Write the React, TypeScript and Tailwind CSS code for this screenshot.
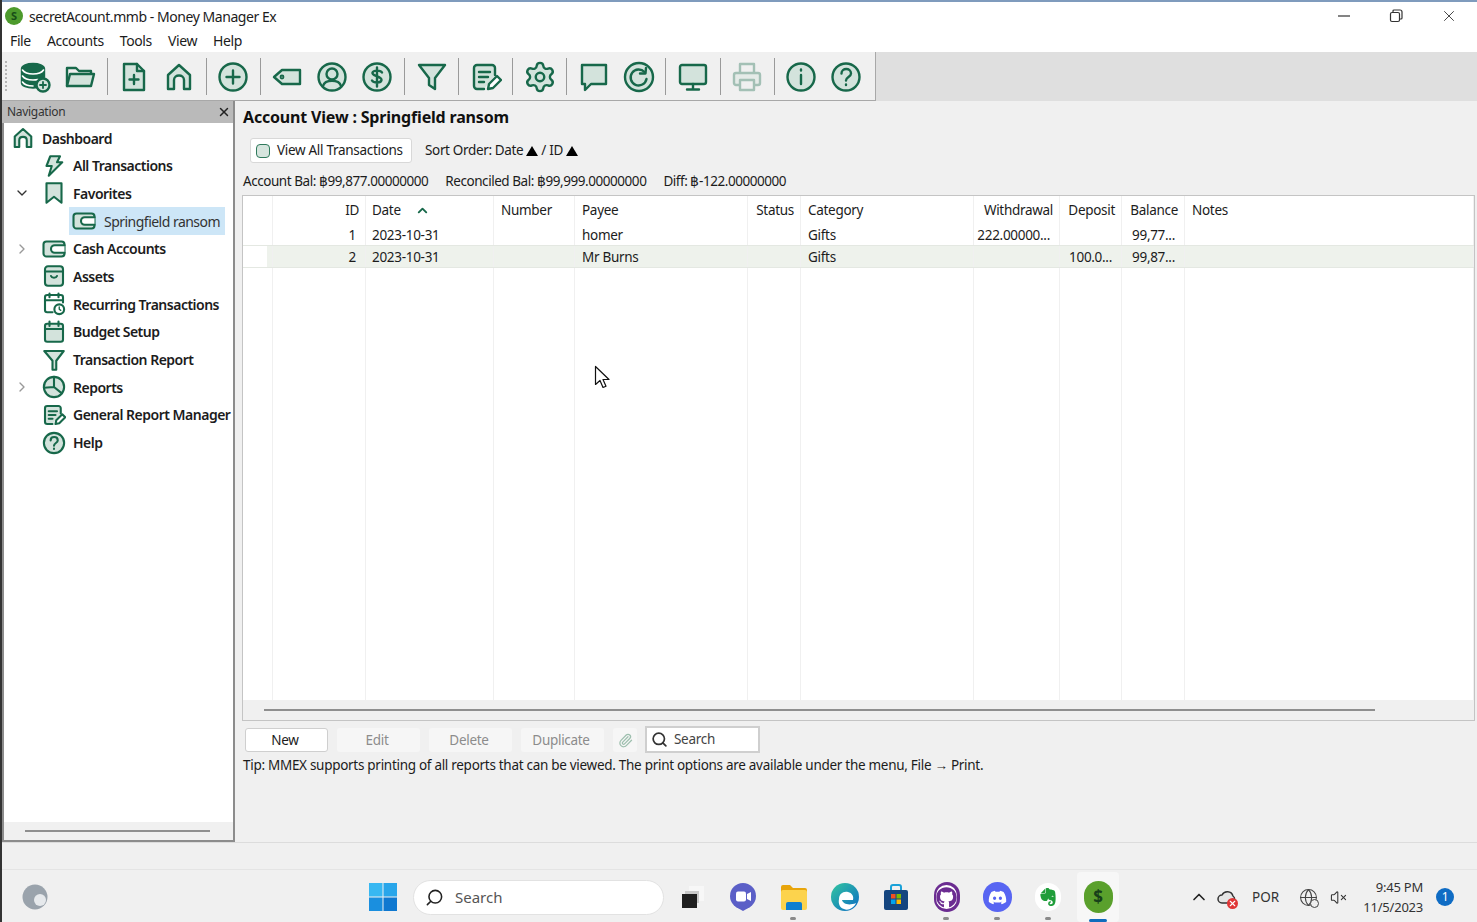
import React from "react";
import { Settings, Search, Globe, VolumeX, ChevronUp, ChevronDown, ChevronRight, Paperclip, X } from "lucide-react";
import { FaGithub, FaDiscord } from "react-icons/fa";
import { SiEvernote } from "react-icons/si";

const G = "#17684a";
const L = "#d3e3dc";

type IP = { size?: number; sw?: number; dim?: boolean };
const Ico = ({ size = 32, sw = 2.4, dim, children }: IP & { children: React.ReactNode }) => (
  <svg width={size} height={size} viewBox="0 0 32 32" fill={L} stroke={G} strokeWidth={sw} strokeLinecap="round" strokeLinejoin="round" opacity={dim ? 0.35 : 1} className="shrink-0">
    {children}
  </svg>
);

const paths: Record<string, React.ReactNode> = {
  db: (<>
    <path d="M3 8c0-3 5-5 11-5s11 2 11 5v8c-3 1-6 4-6 10l-5 .5C8 26.500 3 24.500 3 22z" fill={G} stroke={G} />
    <path d="M3.500 9c2 3 6 4 10.500 4s8.500-1 10.500-4M3.500 15c2 3 6 4 10.500 4 2 0 3 0 5-.5M3.500 21c2 3 6 4 10.500 4" stroke="#fff" strokeWidth="1.6" fill="none" />
    <circle cx="24" cy="24" r="6.500" fill={L} />
    <path d="M24 21v6M21 24h6" strokeWidth="1.800" />
  </>),
  folder: (<>
    <path d="M3 25V7h9l3 3h12v3" fill="none" />
    <path d="M3 25l3-12h24l-3 12z" />
  </>),
  filePlus: (<>
    <path d="M6 3h13l7 7v19H6z" />
    <path d="M19 3v7h7" fill="none" />
    <path d="M16 14v9M11.500 18.500h9" />
  </>),
  home: <path d="M5 28V14L16 4l11 10v14h-6V19c0-6-10-6-10 0v9z" />,
  plus: (<><circle cx="16" cy="16" r="13.500" /><path d="M16 9.500v13M9.500 16h13" /></>),
  tag: (<><path d="M29 9v14H11L3 16l8-7z" /><circle cx="11" cy="16" r="1.500" fill="none" strokeWidth="1.800" /></>),
  user: (<><circle cx="16" cy="16" r="13.500" /><circle cx="16" cy="13" r="5.500" fill="none" /><path d="M7 25c2-7 16-7 18 0" fill="none" /></>),
  dollar: (<><circle cx="16" cy="16" r="13.500" /><path d="M21 11.500c-1-2-8-3-9.500 0-1 4 9 3 9 7.500-.5 3.500-8 3-9.500 .5M16 6.500v19" fill="none" /></>),
  filter: <path d="M3 4h26l-10 13v11l-6-4v-7z" />,
  report: (<>
    <path d="M25 14V7a3 3 0 0 0-3-3H7a3 3 0 0 0-3 3v18a3 3 0 0 0 3 3h7" />
    <path d="M9 11h11M9 16h9M9 21h5" fill="none" />
    <path d="M18 28l1-5 8-8 4 4-8 8z" fill="#fff" />
  </>),
  chat: <path d="M4 4h24v19H13l-6 6v-6H4z" />,
  refresh: (<><circle cx="16" cy="16" r="14" /><path d="M21.500 11a8 8 0 1 0 2 7" fill="none" /><path d="M23 7l-.5 5.500H17" fill="none" /></>),
  monitor: (<><rect x="3" y="4" width="26" height="19" rx="2" /><path d="M16 23v5M10 28.500h12" fill="none" /></>),
  printer: (<><path d="M9 12V3h14v9" fill="none" /><rect x="3" y="12" width="26" height="12" rx="2" /><rect x="9" y="19" width="14" height="10" fill="#f0f0f0" /></>),
  info: (<><circle cx="16" cy="16" r="13.500" /><path d="M16 14v9M16 8.500v1" fill="none" /></>),
  help: (<><circle cx="16" cy="16" r="13.500" /><path d="M11.500 12.500c0-6 9.500-6 9.500 0 0 3.500-5 3.500-5 7M16 23.500v.5" fill="none" /></>),
  bolt: <path d="M11 3h13l-4 8h7L9 29l4-13H6z" />,
  bookmark: <path d="M6 3h20v26l-10-8-10 8z" />,
  wallet: (<><rect x="2" y="6" width="28" height="20" rx="4" /><path d="M30 11H17a5 5 0 0 0 0 10h13" fill="#fff" /></>),
  box: (<><rect x="4" y="3" width="24" height="26" rx="4" /><path d="M4 10h24" fill="none" /><path d="M12 16c1 3 7 3 8 0" fill="none" /></>),
  calClock: (<>
    <path d="M14 27H7a3 3 0 0 1-3-3V7a3 3 0 0 1 3-3h18a3 3 0 0 1 3 3v7" fill="none" />
    <path d="M4 11h24M10 2v5M22 2v5" fill="none" />
    <circle cx="23" cy="23" r="6.500" fill="#fff" /><path d="M23 20v3l2 1.500" fill="none" strokeWidth="1.800" />
  </>),
  calendar: (<><rect x="4" y="5" width="24" height="24" rx="3" /><path d="M4 12h24M10 2v6M22 2v6" fill="none" /></>),
  funnel: <path d="M3 4h26L19 17v12h-5V17z" />,
  pie: (<><circle cx="16" cy="16" r="13.500" /><path d="M16 2.500V16l10.500 8.500M16 16L2.500 17" fill="none" /></>),
};

const Icon = ({ n, ...p }: IP & { n: string }) => <Ico {...p}>{paths[n]}</Ico>;

const toolbar: (string | null)[] = ["db", "folder", null, "filePlus", "home", null, "plus", null, "tag", "user", "dollar", null, "filter", null, "report", null, "gear", null, "chat", "refresh", null, "monitor", null, "printer", null, "info", "help"];

const nav = [
  { t: "Dashboard", i: "home", x: 11, tx: 40 },
  { t: "All Transactions", i: "bolt", x: 42, tx: 71 },
  { t: "Favorites", i: "bookmark", x: 42, tx: 71, c: "d" },
  { t: "Springfield ransom", i: "wallet", x: 72, tx: 102, sel: true },
  { t: "Cash Accounts", i: "wallet", x: 42, tx: 71, c: "r" },
  { t: "Assets", i: "box", x: 42, tx: 71 },
  { t: "Recurring Transactions", i: "calClock", x: 42, tx: 71 },
  { t: "Budget Setup", i: "calendar", x: 42, tx: 71 },
  { t: "Transaction Report", i: "funnel", x: 42, tx: 71 },
  { t: "Reports", i: "pie", x: 42, tx: 71, c: "r" },
  { t: "General Report Manager", i: "report", x: 42, tx: 71 },
  { t: "Help", i: "help", x: 42, tx: 71 },
];

const COLS = "grid grid-cols-[30px_93px_128px_81px_173px_53px_173px_86px_62px_63px_1fr]";
const cell = "border-r border-[#f0f0f0] whitespace-nowrap overflow-hidden";
const headers: [string, string, string][] = [
  ["", "", ""],
  ["ID", "text-right pr-[6px]", "text-right pr-[9px]"],
  ["Date", "pl-[6px]", "pl-[6px]"],
  ["Number", "pl-[7px]", "pl-[7px]"],
  ["Payee", "pl-[7px]", "pl-[7px]"],
  ["Status", "text-right pr-[6px]", "text-right pr-[9px]"],
  ["Category", "pl-[7px]", "pl-[7px]"],
  ["Withdrawal", "text-right pr-[6px]", "text-right pr-[9px]"],
  ["Deposit", "text-right pr-[6px]", "text-right pr-[9px]"],
  ["Balance", "text-right pr-[6px]", "text-right pr-[9px]"],
  ["Notes", "pl-[7px]", "pl-[7px]"],
];
const rows = [
  ["", "1", "2023-10-31", "", "homer", "", "Gifts", "222.00000...", "", "99,77...", ""],
  ["", "2", "2023-10-31", "", "Mr Burns", "", "Gifts", "", "100.0...", "99,87...", ""],
];

const Tri = () => <span className="inline-block w-0 h-0 border-l-[6px] border-r-[6px] border-b-[10px] border-l-transparent border-r-transparent border-b-black mx-[3px]" />;

const TB = ({ children, cls = "w-[51px]" }: { children: React.ReactNode; cls?: string }) => (
  <div className={`h-[50px] shrink-0 flex items-center justify-center relative ${cls}`}>{children}</div>
);
const Dot = () => <span className="absolute bottom-[2px] left-[22px] w-[6px] h-[3px] rounded-full bg-[#8a8a8a]" />;

export default function App() {
  return (
    <div className="relative w-[1477px] h-[922px] overflow-hidden flex flex-col bg-[#f0f0f0] border-l-2 border-[#333] text-[14px] text-[#1c1c1c] font-['Noto_Sans','Open_Sans',sans-serif]">
      <div className="h-[2px] -ml-[2px] shrink-0 bg-[#7f9bbd]" />
      {/* title bar */}
      <div className="h-[28px] shrink-0 bg-white flex items-center pl-[3px]">
        <span className="w-[18px] h-[18px] rounded-full bg-[#4d9a2c] flex items-center justify-center text-[11px] font-bold text-[#174d18]">S</span>
        <span className="ml-[6px] tracking-[-0.45px]">secretAcount.mmb - Money Manager Ex</span>
        <div className="ml-auto flex items-center text-[#333]">
          <svg width="14" height="14" viewBox="0 0 14 14" className="mr-[38px]"><path d="M1 7h12" stroke="#333" strokeWidth="1.200" /></svg>
          <svg width="14" height="14" viewBox="0 0 14 14" fill="none" stroke="#333" strokeWidth="1.200" className="mr-[37px]"><rect x="1.500" y="3.500" width="9" height="9" rx="1.500" /><path d="M4 3V2a1 1 0 0 1 1-1h6a2 2 0 0 1 2 2v6a1 1 0 0 1-1 1h-1" /></svg>
          <X size={18} strokeWidth={1.200} className="mr-[19px]" />
        </div>
      </div>
      {/* menu */}
      <div className="h-[22px] shrink-0 bg-white flex items-center gap-[16px] pl-[8px] pb-[2px] tracking-[-0.38px]">
        {["File", "Accounts", "Tools", "View", "Help"].map((m) => <span key={m}>{m}</span>)}
      </div>
      {/* toolbar */}
      <div className="h-[49px] shrink-0 bg-[#dfdfdf] flex">
        <div className="w-[874px] h-[49px] bg-[#f0f0f0] border-r border-b border-[#a8a8a8] flex items-center pl-[10.5px] pt-[1px] relative">
          <div className="absolute left-[3px] top-[9px] bottom-[9px] w-[3px] border-l-2 border-dotted border-[#b5b5b5]" />
          {toolbar.map((n, i) =>
            n === null ? (
              <div key={i} className="w-[9.06px] h-[37px] flex justify-center shrink-0"><div className="w-px h-full bg-[#9a9a9a]" /></div>
            ) : (
              <div key={i} className="w-[45.06px] flex justify-center shrink-0">
                {n === "gear" ? <Settings size={34} color={G} fill={L} strokeWidth={1.700} /> : <Icon n={n} dim={n === "printer"} />}
              </div>
            )
          )}
        </div>
      </div>
      {/* body */}
      <div className="h-[742px] shrink-0 flex border-b border-[#dcdcdc]">
        {/* nav */}
        <div className="w-[233px] h-[741px] shrink-0 flex flex-col border-b-2 border-r-2 border-[#8c8c8c]">
          <div className="h-[22px] shrink-0 bg-[#bababa] flex items-center justify-between pl-[5px] pr-[2px] text-[12px] text-[#333] tracking-[-0.3px]">
            <span>Navigation</span>
            <X size={14} strokeWidth={2.500} color="#222" />
          </div>
          <div className="flex-1 flex flex-col bg-white border-l-2 border-[#8c8c8c] pt-[1.2px] overflow-hidden">
            {nav.map((r) => (
              <div key={r.t} className="h-[27.7px] shrink-0 flex items-center relative font-semibold tracking-[-0.5px] whitespace-nowrap">
                {r.c && (
                  <span className="absolute left-[10px]">
                    {r.c === "d" ? <ChevronDown size={16} color="#333" /> : <ChevronRight size={16} color="#999" />}
                  </span>
                )}
                {r.sel && <span className="absolute left-[65px] w-[156px] top-0 bottom-0 bg-[#cde6f7]" />}
                <span className="absolute" style={{ left: r.x - 4 }}><Icon n={r.i} size={24} sw={2.800} /></span>
                <span className={`absolute ${r.sel ? "font-normal text-[#333] tracking-[-0.52px]" : ""}`} style={{ left: r.tx - 2 }}>{r.t}</span>
              </div>
            ))}
            <div className="flex-1" />
            <div className="h-[18px] shrink-0 bg-[#f0f0f0] flex items-center pl-[21px]"><div className="w-[185px] h-[2px] bg-[#8f8f8f]" /></div>
          </div>
        </div>
        {/* main */}
        <div className="flex-1 min-w-0 flex flex-col pl-[7px] pr-[2px]">
          <div className="h-[32px] shrink-0 flex items-center pl-px pb-[1px] font-bold text-[16px] text-[#111] tracking-[-0.18px]">Account View : Springfield ransom</div>
          <div className="h-[25px] mt-[5px] shrink-0 flex items-center pl-[8px]">
            <div className="w-[162px] h-[25px] bg-white border border-[#d8d8d8] rounded-[3px] flex items-center pl-[5px] gap-[7px] tracking-[-0.3px] text-[13.500px] whitespace-nowrap">
              <span className="w-[14px] h-[14px] rounded-[4px] border border-[#2f7a5c] bg-[#d6e5de] shrink-0" />
              View All Transactions
            </div>
            <span className="ml-[13px] tracking-[-0.35px] text-[13.500px] flex items-center">Sort Order: Date <Tri /> / ID <Tri /></span>
          </div>
          <div className="h-[32px] shrink-0 flex items-center pl-px pt-[4px] gap-[17px] tracking-[-0.45px] text-[13.500px]">
            <span>Account Bal: ฿99,877.00000000</span>
            <span>Reconciled Bal: ฿99,999.00000000</span>
            <span>Diff: ฿-122.00000000</span>
          </div>
          {/* table */}
          <div className="h-[526px] shrink-0 border border-[#c4c4c4] flex flex-col bg-white text-[13.500px] tracking-[-0.3px]">
            <div className={`${COLS} h-[28px] shrink-0`}>
              {headers.map(([h, a], i) => (
                <div key={i} className={`${cell} ${a} leading-[29px] relative`}>
                  {h}
                  {h === "Date" && <ChevronUp size={15} strokeWidth={3} color={G} className="absolute left-[49px] top-[7px]" />}
                </div>
              ))}
            </div>
            {rows.map((r, ri) => (
              <div key={ri} className={`${COLS} h-[22px] shrink-0 border-b border-[#e4e8e2]`}>
                {r.map((c, i) => (
                  <div key={i} className={`${cell} ${headers[i][2]} leading-[23px] ${ri === 1 ? (i === 0 ? "bg-[linear-gradient(90deg,#fff_24px,#eef2ec_24px)]" : "bg-[#eef2ec]") : ""}`}>{c}</div>
                ))}
              </div>
            ))}
            <div className={`${COLS} flex-1 min-h-0`}>
              {headers.map((_, i) => <div key={i} className={cell} />)}
            </div>
            <div className="h-[20px] shrink-0 bg-[#f0f0f0] flex items-center pl-[21px]"><div className="w-[1111px] h-[2px] bg-[#8f8f8f]" /></div>
          </div>
          {/* buttons */}
          <div className="h-[38px] shrink-0 flex items-center pl-[3px] text-[13.500px] tracking-[-0.3px]">
            <div className="w-[83px] h-[24px] flex items-center justify-center pr-[3px] bg-white border border-[#cfcfcf] rounded-[3px]">New</div>
            {["Edit", "Delete", "Duplicate"].map((b) => (
              <div key={b} className="ml-[9px] w-[83px] h-[24px] flex items-center justify-center pr-[3px] bg-[#f6f6f6] rounded-[3px] text-[#8c8c8c]">{b}</div>
            ))}
            <div className="ml-[9px] w-[24px] h-[24px] flex items-center justify-center bg-[#f6f6f6] rounded-[3px]"><Paperclip size={15} color="#9dbfae" /></div>
            <div className="ml-[8px] mb-[2px] w-[115px] h-[27px] flex items-center pl-[4px] gap-[6px] bg-white border-2 border-[#cfcfcf] text-[#444]"><Search size={17} color="#333" strokeWidth={2.400} />Search</div>
          </div>
          <div className="-mt-[4px] pl-px leading-[20px] text-[13.500px] tracking-[-0.29px] whitespace-nowrap">Tip: MMEX supports printing of all reports that can be viewed. The print options are available under the menu, File → Print.</div>
        </div>
      </div>
      <div className="h-[26px] shrink-0" />
      {/* taskbar */}
      <div className="h-[53px] shrink-0 flex items-center pt-[2px] border-t border-[#e4e4e4]">
        <div className="ml-[19px] w-[28px] flex justify-center">
          <svg width="26" height="28" viewBox="0 0 26 28"><circle cx="13" cy="14" r="12.500" fill="#9aa3ac" /><circle cx="18" cy="17" r="6" fill="#e6e9ec" /></svg>
        </div>
        <div className="ml-[309px] w-[50px] flex justify-center">
          <svg width="28" height="28" viewBox="0 0 28 28"><rect width="13.500" height="13.500" fill="#38b8f2" /><rect x="14.500" width="13.500" height="13.500" fill="#29a6ea" /><rect y="14.500" width="13.500" height="13.500" fill="#1a8fdf" /><rect x="14.500" y="14.500" width="13.500" height="13.500" fill="#0f78d0" /></svg>
        </div>
        <div className="ml-[5px] w-[251px] h-[35px] rounded-full bg-white border border-[#e2e2e2] flex items-center pl-[11px] gap-[11px] text-[#555] text-[15px]">
          <Search size={19} color="#222" className="-scale-x-100" />Search
        </div>
        <div className="ml-[2px] flex">
          <TB><svg width="24" height="24" viewBox="0 0 24 24" className="ml-[3px]"><rect x="8" y="1" width="15" height="15" fill="#f7f7f7" /><rect x="4" y="6" width="14" height="12" fill="#c9c9c9" /><rect x="1" y="9" width="15" height="14" fill="#1f1f1f" /></svg></TB>
          <TB><svg width="28" height="28" viewBox="0 0 28 28"><circle cx="14" cy="13" r="13" fill="#5b5fc7" /><path d="M7 24l7 4 7-4z" fill="#5b5fc7" /><rect x="7" y="8.500" width="10" height="10" rx="2" fill="#fff" /><path d="M18 11l4-2v9l-4-2z" fill="#fff" /></svg></TB>
          <TB><Dot /><svg width="28" height="26" viewBox="0 0 28 26"><path d="M1 3a2 2 0 0 1 2-2h7l3 3h12a2 2 0 0 1 2 2v3H1z" fill="#e8a50b" /><rect x="1" y="6" width="26" height="20" rx="2" fill="#fcd34d" /><path d="M8 18h12a2 2 0 0 1 2 2v6H6v-6a2 2 0 0 1 2-2z" fill="#0e7fd0" /></svg></TB>
          <TB><svg width="28" height="28" viewBox="0 0 28 28"><defs><linearGradient id="e1" x1="0" y1="0" x2="1" y2="1"><stop offset="0" stopColor="#33c6a0" /><stop offset="1" stopColor="#0c6cc4" /></linearGradient></defs><circle cx="14" cy="14" r="14" fill="url(#e1)" /><path d="M8 16c0-5 4-8 9-7 4 1 6 4 5 8H11c1 4 7 6 14 3-2 5-8 8-12 6-4-1-6-5-5-10z" fill="#fff" /></svg></TB>
          <TB><svg width="26" height="28" viewBox="0 0 26 28"><path d="M8 8V4a2 2 0 0 1 2-2h6a2 2 0 0 1 2 2v4" fill="none" stroke="#1aa1d8" strokeWidth="2" /><rect x="1" y="7" width="24" height="20" rx="2" fill="#14457f" /><rect x="8" y="11" width="4.500" height="4.500" fill="#f25022" /><rect x="13.500" y="11" width="4.500" height="4.500" fill="#7fba00" /><rect x="8" y="16.500" width="4.500" height="4.500" fill="#00a4ef" /><rect x="13.500" y="16.500" width="4.500" height="4.500" fill="#ffb900" /></svg></TB>
          <TB><Dot /><span className="w-[26px] h-[30px] rounded-full bg-[#6b2c91] flex items-center justify-center"><span className="w-[21px] h-[24px] rounded-full bg-white flex items-center justify-center"><FaGithub size={21} color="#6b2c91" /></span></span></TB>
          <TB><Dot /><span className="w-[29px] h-[30px] rounded-full bg-[#5865f2] flex items-center justify-center"><FaDiscord size={19} color="#fff" /></span></TB>
          <TB cls="w-[50px]"><Dot /><span className="w-[26px] h-[28px] rounded-full bg-white flex items-center justify-center"><SiEvernote size={18} color="#1f9d3a" /></span></TB>
          <TB cls="w-[42px] ml-[4px] bg-[#f7f7f7] rounded-[4px]">
            <span className="w-[29px] h-[32px] rounded-full bg-[#5aa02c] flex items-center justify-center font-bold text-[17px] text-[#17401a]">$</span>
            <span className="absolute bottom-[0px] left-[12px] w-[18px] h-[3px] rounded-full bg-[#0f6cbd]" />
          </TB>
        </div>
        <div className="ml-[70px] flex items-center">
          <ChevronUp size={20} color="#222" />
          <span className="ml-[8px] relative w-[20px] h-[20px] flex items-center justify-center">
            <svg width="20" height="18" viewBox="0 0 20 18"><path d="M5 15a4 4 0 0 1 0-8 6 6 0 0 1 11 1 4 4 0 0 1-1 7z" fill="#e5e5e5" stroke="#333" strokeWidth="1.500" /></svg>
            <span className="absolute -right-[1px] -bottom-[2px] w-[11px] h-[11px] rounded-full bg-[#e03636] flex items-center justify-center"><X size={9} color="#fff" strokeWidth={3} /></span>
          </span>
          <span className="ml-[15px] text-[#333] text-[13.500px]">POR</span>
          <span className="ml-[20px] relative flex">
            <Globe size={19} color="#444" strokeWidth={1.300} />
            <span className="absolute -right-[1px] -bottom-[1px] w-[9px] h-[9px] rounded-full bg-[#f0f0f0] border border-[#444]" />
          </span>
          <VolumeX size={17} color="#333" strokeWidth={1.500} className="ml-[12px]" />
          <div className="ml-[6px] w-[70px] text-right text-[13px] leading-[20px] text-[#333] tracking-[-0.2px]">
            <div>9:45 PM</div>
            <div>11/5/2023</div>
          </div>
          <span className="ml-[13px] w-[18px] h-[18px] rounded-full bg-[#0f6cc4] text-white text-[12px] flex items-center justify-center">1</span>
        </div>
      </div>
      {/* mouse pointer over the table */}
      <svg width="16" height="24" viewBox="0 0 16 24" className="absolute left-[592px] top-[365px]"><path d="M1.500 1.500v18l4.500-4 3 7 3-1.300-3-6.700h6z" fill="#fff" stroke="#111" strokeWidth="1.200" strokeLinejoin="round" /></svg>
    </div>
  );
}
